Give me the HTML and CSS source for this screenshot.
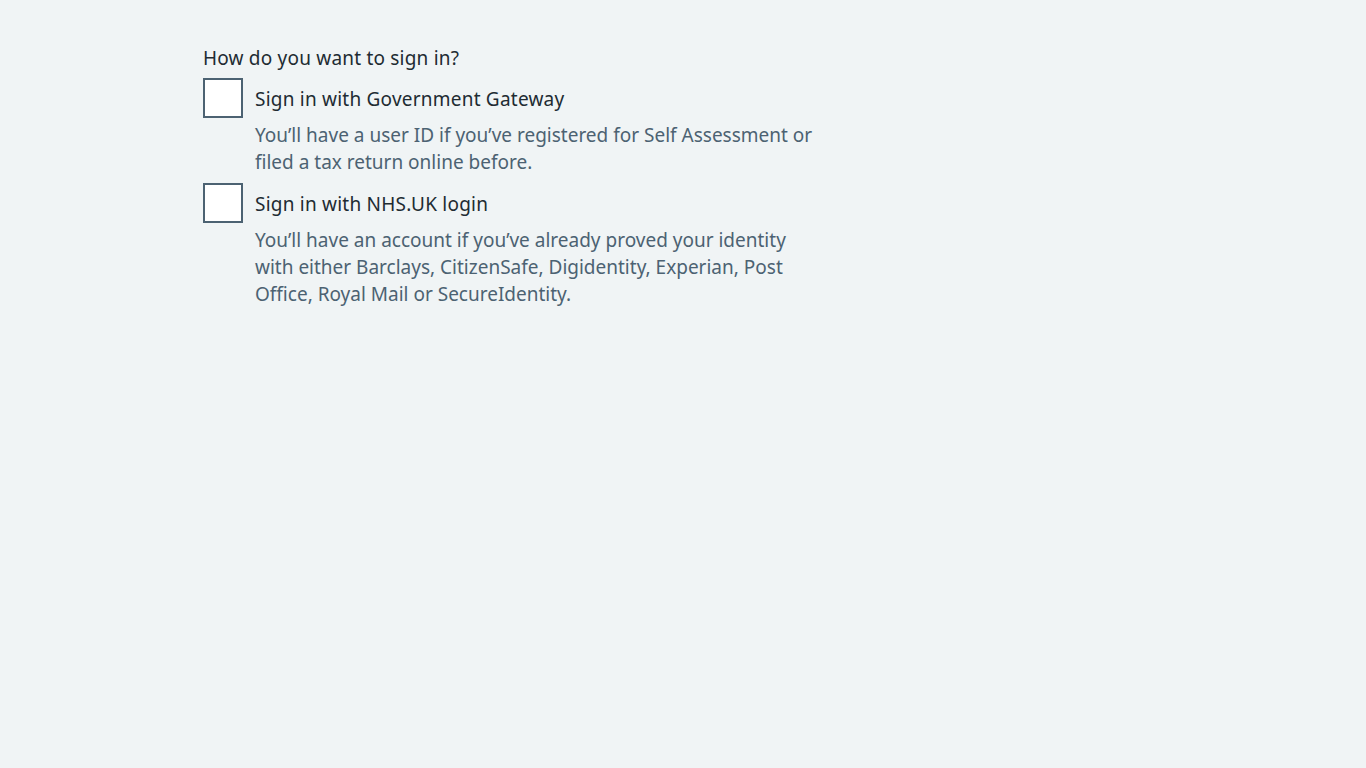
FILE: index.html
```html
<!DOCTYPE html>
<html lang="en">
<head>
<meta charset="utf-8">
<title>How do you want to sign in?</title>
<link rel="stylesheet" href="styles.css">
</head>
<body>
<main class="container">
  <div class="column">
    <fieldset class="fieldset">
      <legend class="legend">How do you want to sign in?</legend>
      <div class="checkboxes">
        <div class="item">
          <input class="box" type="checkbox" id="gg">
          <label class="label" for="gg">Sign in with Government Gateway</label>
          <div class="hint">You’ll have a user ID if you’ve registered for Self Assessment or filed a tax return online before.</div>
        </div>
        <div class="item">
          <input class="box" type="checkbox" id="nhs">
          <label class="label" for="nhs">Sign in with NHS.UK login</label>
          <div class="hint">You’ll have an account if you’ve already proved your identity with either Barclays, CitizenSafe, Digidentity, Experian, Post Office, Royal Mail or SecureIdentity.</div>
        </div>
      </div>
    </fieldset>
  </div>
</main>
</body>
</html>
```

FILE: styles.css
```css
html, body {
  margin: 0;
  background: #f0f4f5;
}
body {
  font-family: "Noto Sans", "Open Sans", Arial, sans-serif;
  font-size: 19px;
  line-height: 28px;
  color: #212b32;
}
.container {
  width: 960px;
  margin: 0 auto;
  padding-top: 44px;
}
.column {
  width: 620px;
}
.fieldset {
  border: 0;
  margin: 0;
  padding: 0;
  min-width: 0;
}
.legend {
  padding: 0;
  margin: 0 0 6px;
  display: block;
  letter-spacing: 0.2px;
}
.checkboxes {
  display: flex;
  flex-direction: column;
  gap: 7px;
}
.item {
  display: grid;
  grid-template-columns: 40px 1fr;
  column-gap: 12px;
}
.box {
  appearance: none;
  -webkit-appearance: none;
  grid-column: 1;
  grid-row: 1;
  width: 40px;
  height: 40px;
  margin: 0;
  box-sizing: border-box;
  border: 2px solid #4c6272;
  background: #ffffff;
  border-radius: 0;
}
.label {
  grid-column: 2;
  grid-row: 1;
  padding-top: 7px;
  letter-spacing: 0.22px;
}
.hint {
  grid-column: 2;
  grid-row: 2;
  color: #4c6272;
  line-height: 27px;
  margin-top: 4px;
}
```
